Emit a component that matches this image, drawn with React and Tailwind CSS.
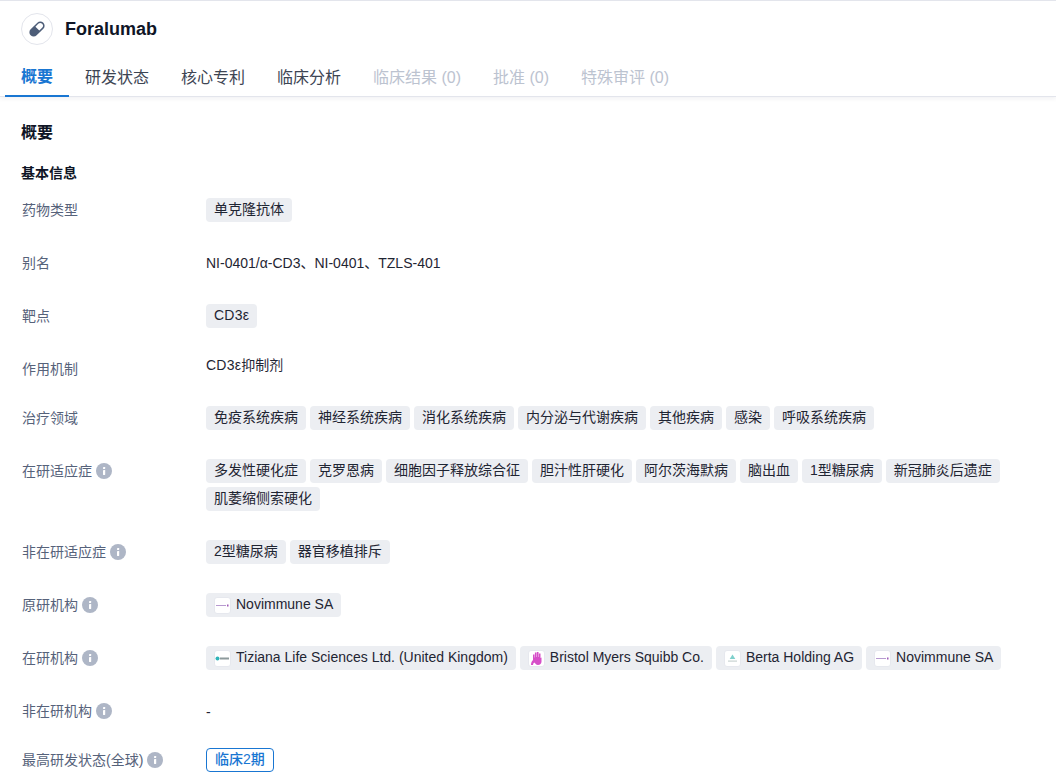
import React from "react";

const Info = () => (
  <svg width="16" height="16" viewBox="0 0 16 16" className="ml-1 shrink-0">
    <circle cx="8" cy="8" r="8" fill="#aeb6c6" />
    <rect x="7" y="7" width="2.2" height="5" rx="0.4" fill="#fff" />
    <rect x="7" y="4" width="2.2" height="2" rx="0.4" fill="#fff" />
  </svg>
);

const Tag = ({ children }) => (
  <span className="h-6 px-2 pb-0.5 flex items-center rounded bg-[#eceef2] text-sm text-[#1f2533] whitespace-nowrap">{children}</span>
);

const LogoTag = ({ logo, children }) => (
  <span className="h-6 px-2 flex items-center rounded bg-[#eceef2] text-sm text-[#1f2533] whitespace-nowrap">
    {logo}
    <span className="pb-0.5">{children}</span>
  </span>
);

const LogoBox = ({ children }) => (
  <span className="w-[17px] h-[17px] mr-[5px] rounded-[3px] bg-white border border-[#e6e8ee] flex items-center justify-center shrink-0">
    <svg width="15" height="15" viewBox="0 0 15 15">{children}</svg>
  </span>
);

const Novimmune = () => (
  <LogoBox>
    <rect x="1" y="7" width="10" height="1" fill="#b79ad0" />
    <rect x="12" y="6.500" width="1.500" height="2" fill="#a05ab8" />
  </LogoBox>
);
const Tiziana = () => (
  <LogoBox>
    <circle cx="2.500" cy="7.500" r="2" fill="#2fb3b8" />
    <rect x="5" y="6.500" width="9" height="2" fill="#8d9a9c" />
  </LogoBox>
);
const BMS = () => (
  <LogoBox>
    <path d="M4 3.500h1.500v3h.4V1.500h1.600v4.500h.4V1h1.600v5h.4V2.500h1.600v4.500l1-.5v4c0 2.200-1.500 3.500-3.500 3.500-1.800 0-2.700-1-3.100-2.200H5c-.7.700-.9 1.300-.9 2.200H2c0-2.200.8-4 2-5z" fill="#d64fc8" />
  </LogoBox>
);
const Berta = () => (
  <LogoBox>
    <path d="M7.500 3.500l2.800 4.500H4.700z" fill="#7fd0cc" />
    <rect x="3" y="9.500" width="9" height="1.200" fill="#c9d3d2" />
  </LogoBox>
);

const Row = ({ label, info, mb = "mb-[29px]", children }) => (
  <div className={`flex items-start ${mb}`}>
    <div className="w-[185px] h-6 pl-px flex items-center text-sm text-[#56627a] shrink-0 whitespace-nowrap">
      {label}
      {info && <Info />}
    </div>
    <div className="flex-1 min-w-0">{children}</div>
  </div>
);

const Tags = ({ items }) => (
  <div className="flex flex-wrap gap-1">
    {items.map((t) => (
      <Tag key={t}>{t}</Tag>
    ))}
  </div>
);

const tabs = [
  ["概要", "active"],
  ["研发状态", "on"],
  ["核心专利", "on"],
  ["临床分析", "on"],
  ["临床结果 (0)", "off"],
  ["批准 (0)", "off"],
  ["特殊审评 (0)", "off"],
];

export default function App() {
  return (
    <div
      className="w-[1056px] h-[779px] overflow-hidden bg-white"
      style={{ fontFamily: '"Liberation Sans", "Noto Sans CJK SC", sans-serif' }}
    >
      <header className="h-[97px] border-t border-[#e3e5ec] border-b border-b-[#e3e5ec] shadow-[0_2px_4px_rgba(30,40,70,0.06)] relative">
        <div className="h-[44px] pt-3 pl-[21px] flex items-start">
          <div className="w-8 h-8 rounded-full border border-[#e3e5ec] flex items-center justify-center">
            <svg width="20" height="20" viewBox="0 0 20 20">
              <g transform="rotate(-45 10 10)">
                <rect x="1" y="5.750" width="18" height="8.500" rx="4.250" fill="#4d5d78" />
                <path d="M10.500 7.250h4a2.750 2.750 0 0 1 0 5.500h-4z" fill="#fff" />
              </g>
            </svg>
          </div>
          <h1 className="ml-3 mt-[5px] text-lg leading-[22px] font-bold text-[#0f1526]">Foralumab</h1>
        </div>
        <nav className="flex pl-[5px] mt-[6px]">
          {tabs.map(([t, s]) => (
            <div
              key={t}
              className={`h-[46px] px-4 pt-2 flex items-center text-base whitespace-nowrap ${
                s === "active"
                  ? "text-[#1976d2] font-semibold border-b-2 border-[#1976d2]"
                  : s === "on"
                  ? "text-[#3d4553]"
                  : "text-[#bcc3d0]"
              }`}
            >
              {t}
            </div>
          ))}
        </nav>
      </header>
      <main className="pl-[21px]">
        <h2 className="mt-[26px] text-base leading-5 font-semibold text-[#0f1526]">概要</h2>
        <h3 className="mt-5 mb-[15px] text-sm leading-5 font-semibold text-[#0f1526]">基本信息</h3>
        <Row label="药物类型">
          <Tags items={["单克隆抗体"]} />
        </Row>
        <Row label="别名">
          <div className="h-6 flex items-center text-sm text-[#1f2533]">NI-0401/α-CD3、NI-0401、TZLS-401</div>
        </Row>
        <Row label="靶点">
          <div className="flex">
            <Tag><span className="tracking-[0.25px]">CD3ε</span></Tag>
          </div>
        </Row>
        <Row label="作用机制" mb="mb-[25px]">
          <div className="-mt-[2px] text-sm leading-5 text-[#1f2533]"><span className="tracking-[0.25px]">CD3ε</span>抑制剂</div>
        </Row>
        <Row label="治疗领域">
          <Tags items={["免疫系统疾病", "神经系统疾病", "消化系统疾病", "内分泌与代谢疾病", "其他疾病", "感染", "呼吸系统疾病"]} />
        </Row>
        <Row label="在研适应症" info>
          <Tags items={["多发性硬化症", "克罗恩病", "细胞因子释放综合征", "胆汁性肝硬化", "阿尔茨海默病", "脑出血", "1型糖尿病", "新冠肺炎后遗症", "肌萎缩侧索硬化"]} />
        </Row>
        <Row label="非在研适应症" info>
          <Tags items={["2型糖尿病", "器官移植排斥"]} />
        </Row>
        <Row label="原研机构" info>
          <div className="flex">
            <LogoTag logo={<Novimmune />}>Novimmune SA</LogoTag>
          </div>
        </Row>
        <Row label="在研机构" info>
          <div className="flex flex-wrap gap-1">
            <LogoTag logo={<Tiziana />}>Tiziana Life Sciences Ltd. (United Kingdom)</LogoTag>
            <LogoTag logo={<BMS />}>Bristol Myers Squibb Co.</LogoTag>
            <LogoTag logo={<Berta />}>Berta Holding AG</LogoTag>
            <LogoTag logo={<Novimmune />}>Novimmune SA</LogoTag>
          </div>
        </Row>
        <Row label="非在研机构" info mb="mb-[25px]">
          <div className="h-6 pt-px flex items-center text-sm text-[#1f2533]">-</div>
        </Row>
        <Row label="最高研发状态(全球)" info>
          <div className="flex">
            <span className="h-6 px-2 pb-0.5 flex items-center rounded border border-[#1976d2] text-sm font-medium text-[#1976d2]">临床2期</span>
          </div>
        </Row>
      </main>
    </div>
  );
}
